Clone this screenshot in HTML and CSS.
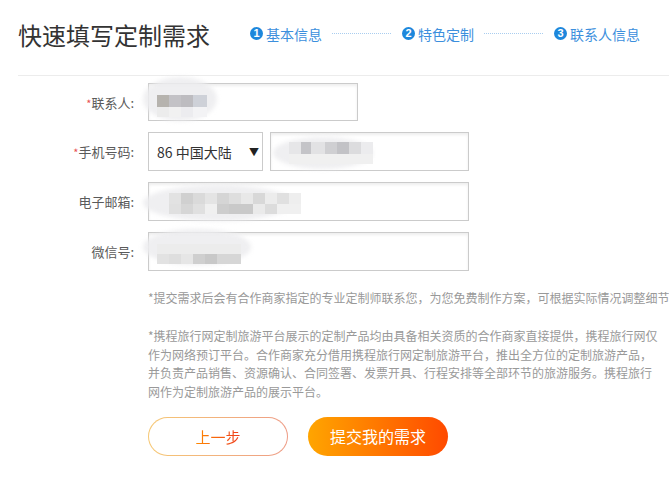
FILE: index.html
```html
<!DOCTYPE html>
<html lang="zh">
<head>
<meta charset="utf-8">
<link rel="stylesheet" href="styles.css">
</head>
<body>
<div class="page">
  <header class="head">
    <h1 class="title">快速填写定制需求</h1>
    <ol class="steps">
      <li class="step"><span class="num">1</span>基本信息</li>
      <li class="dots"></li>
      <li class="step"><span class="num">2</span>特色定制</li>
      <li class="dots"></li>
      <li class="step"><span class="num">3</span>联系人信息</li>
    </ol>
  </header>
  <form class="form">
    <div class="row">
      <label class="lbl"><i class="req">*</i>联系人:</label>
      <div class="box w-name">
        <span class="smudge s1"></span>
        <span class="pix p1"></span>
      </div>
    </div>
    <div class="row">
      <label class="lbl"><i class="req">*</i>手机号码:</label>
      <div class="box sel">86 中国大陆<span class="arrow">▼</span></div>
      <div class="box w-phone">
        <span class="smudge s2"></span>
        <span class="pix p2"></span>
      </div>
    </div>
    <div class="row">
      <label class="lbl">电子邮箱:</label>
      <div class="box w-full">
        <span class="smudge s3"></span>
        <span class="pix p3"></span>
      </div>
    </div>
    <div class="row">
      <label class="lbl">微信号:</label>
      <div class="box w-full">
        <span class="smudge s4"></span>
        <span class="pix p4"></span>
      </div>
    </div>
    <p class="note one">*提交需求后会有合作商家指定的专业定制师联系您，为您免费制作方案，可根据实际情况调整细节</p>
    <p class="note two">*携程旅行网定制旅游平台展示的定制产品均由具备相关资质的合作商家直接提供，携程旅行网仅作为网络预订平台。合作商家充分借用携程旅行网定制旅游平台，推出全方位的定制旅游产品，并负责产品销售、资源确认、合同签署、发票开具、行程安排等全部环节的旅游服务。携程旅行网作为定制旅游产品的展示平台。</p>
    <div class="actions">
      <button type="button" class="btn prev"><span class="grad-text">上一步</span></button>
      <button type="button" class="btn submit">提交我的需求</button>
    </div>
  </form>
</div>
</body>
</html>
```
FILE: styles.css
```css
* { box-sizing: border-box; }
html, body { margin: 0; padding: 0; background: #fff; overflow: hidden; }
body {
  font-family: "Microsoft YaHei", "Noto Sans CJK SC", "Noto Sans", sans-serif;
  color: #333;
  width: 669px;
  height: 489px;
}
.page { padding-left: 18px; }

.head {
  display: flex;
  align-items: center;
  height: 76px;
  padding-bottom: 8px;
  border-bottom: 1px solid #ececec;
}
.title {
  margin: 0;
  font-size: 24px;
  font-weight: normal;
  color: #333;
  line-height: 1;
  letter-spacing: 0;
  padding-top: 2px;
  width: 232px;
}
.steps {
  list-style: none;
  margin: 0;
  padding: 0;
  display: flex;
  align-items: center;
  color: #3c8fdd;
  font-size: 14px;
  line-height: 1;
}
.step { display: flex; align-items: center; }
.num {
  width: 13px;
  height: 13px;
  border-radius: 50%;
  background: #1d87dc;
  color: #fff;
  font-size: 11px;
  font-weight: bold;
  font-family: "Liberation Sans", Arial, sans-serif;
  display: inline-flex;
  align-items: center;
  justify-content: center;
  margin-right: 3px;
}
.dots {
  width: 59px;
  height: 1px;
  margin: 0 11px 0 10px;
  background-image: linear-gradient(90deg, #a9cdef 50%, transparent 50%);
  background-size: 2px 1px;
}

.form { padding-top: 7px; }
.row {
  display: flex;
  align-items: center;
  margin-bottom: 11px;
}
.lbl {
  width: 116px;
  margin-right: 14px;
  text-align: right;
  font-size: 13px;
  color: #5a5a5a;
  white-space: nowrap;
}
.req { font-style: normal; color: #e8504f; font-size: 11px; }
.box {
  position: relative;
  height: 39px;
  border: 1px solid #cbcbcb;
  box-shadow: inset 0 2px 3px rgba(0,0,0,0.07);
  background: #fff;
}
.w-name { width: 210px; height: 38px; }
.w-phone { width: 199px; margin-left: 7px; }
.w-full { width: 321px; }
.sel {
  width: 115px;
  display: flex;
  align-items: center;
  padding-left: 8px;
  font-size: 14px;
  color: #333;
  box-shadow: none;
}
.arrow {
  font-size: 10px;
  margin-left: auto;
  margin-right: 3px;
  color: #222;
}

.smudge {
  position: absolute;
  border-radius: 50%;
  background: rgba(236,236,238,0.85);
  filter: blur(2px);
}
.pix { position: absolute; filter: blur(0.6px); }
.s1 { left: -6px; top: -7px; width: 74px; height: 44px; }
.p1 {
  left: 8px; top: 11px; width: 50px; height: 22px;
  background:
    linear-gradient(90deg, #b6b3ae 0 12px, #c3c2c6 12px 24px, #bdbcc0 24px 36px, #ced1d8 36px 50px) top / 100% 12px no-repeat,
    linear-gradient(90deg, #ececec 0 12px, #f1f1f1 12px 24px, #ececef 24px 36px, #f3f3f5 36px 50px) bottom / 100% 10px no-repeat;
}
.s2 { left: 2px; top: 4px; width: 100px; height: 32px; }
.p2 {
  left: 18px; top: 9px; width: 84px; height: 22px;
  background:
    linear-gradient(90deg, #e6e6e8 0 12px, #c4c4c8 12px 22px, #e2e2e4 22px 36px, #cfcfd2 36px 48px, #c2c2c6 48px 60px, #dcdcde 60px 72px, #ececee 72px 84px) top / 100% 12px no-repeat,
    linear-gradient(90deg, #f0f0f0 0 84px) bottom / 100% 10px no-repeat;
}
.s3 { left: -6px; top: 2px; width: 150px; height: 36px; }
.p3 {
  left: 20px; top: 10px; width: 132px; height: 21px;
  background:
    linear-gradient(90deg, #e2e2e2 0 12px, #d0d0d0 12px 24px, #dadada 24px 36px, #e4e4e4 36px 48px, #d5d5d5 48px 60px, #dedede 60px 72px, #e8e8e8 72px 84px, #d8d8d8 84px 96px, #ececec 96px 108px, #e0e0e0 108px 120px, #eeeeee 120px 132px) top / 100% 11px no-repeat,
    linear-gradient(90deg, #e0e0e0 0 12px, #d6d6d6 12px 24px, #e0e0e0 24px 36px, #f0f0f0 36px 48px, #cdcdcd 48px 60px, #c9c9c9 60px 84px, #eaeaea 84px 96px, #dcdcdc 96px 108px, #f0f0f0 108px 132px) bottom / 100% 10px no-repeat;
}
.s4 { left: -6px; top: -4px; width: 108px; height: 36px; }
.p4 {
  left: 8px; top: 11px; width: 84px; height: 20px;
  background:
    linear-gradient(90deg, #ececec 0 84px) top / 100% 10px no-repeat,
    linear-gradient(90deg, #e2e2e2 0 12px, #dedede 12px 24px, #e6e6e6 24px 36px, #cfcfcf 36px 48px, #c8c8c8 48px 60px, #d6d6d6 60px 84px) bottom / 100% 10px no-repeat;
}

.note {
  margin: 0 0 0 130px;
  font-size: 12px;
  line-height: 19px;
  color: #999;
}
.note.one { margin-top: 17px; white-space: nowrap; }
.note.two { margin-top: 20px; width: 514px; line-height: 18.7px; }

.actions {
  display: flex;
  gap: 20px;
  margin: 15px 0 0 130px;
}
.btn {
  width: 140px;
  height: 39px;
  border-radius: 20px;
  font-family: inherit;
  font-size: 15px;
  cursor: pointer;
  padding: 0;
}
.prev {
  border: 1px solid transparent;
  background:
    linear-gradient(#fff, #fff) padding-box,
    linear-gradient(90deg, #f6c874, #ee9c86) border-box;
}
.grad-text {
  background: linear-gradient(90deg, #ff8a00, #ee3a1c);
  -webkit-background-clip: text;
  background-clip: text;
  color: transparent;
}
.submit {
  border: none;
  color: #fff;
  font-size: 16px;
  background: linear-gradient(90deg, #ffa500, #ff4a00);
}
```
